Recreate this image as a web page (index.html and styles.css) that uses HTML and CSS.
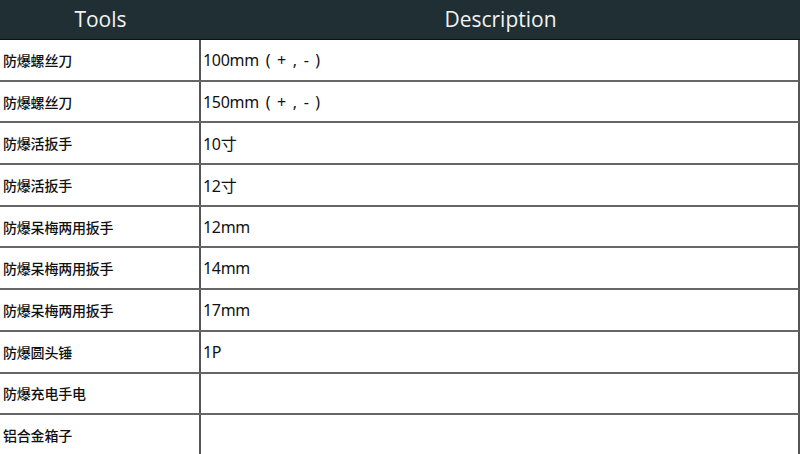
FILE: index.html
```html
<!DOCTYPE html>
<html>
<head>
<meta charset="utf-8">
<link rel="stylesheet" href="styles.css">
</head>
<body>
<div class="table">
  <div class="head">
    <div class="hcell">Tools</div>
    <div class="hcell">Description</div>
  </div>
  <div class="row"><div class="c1">防爆螺丝刀</div><div class="c2">100mm ( + , - )</div></div>
  <div class="row"><div class="c1">防爆螺丝刀</div><div class="c2">150mm ( + , - )</div></div>
  <div class="row"><div class="c1">防爆活扳手</div><div class="c2">10寸</div></div>
  <div class="row"><div class="c1">防爆活扳手</div><div class="c2">12寸</div></div>
  <div class="row"><div class="c1">防爆呆梅两用扳手</div><div class="c2">12mm</div></div>
  <div class="row"><div class="c1">防爆呆梅两用扳手</div><div class="c2">14mm</div></div>
  <div class="row"><div class="c1">防爆呆梅两用扳手</div><div class="c2">17mm</div></div>
  <div class="row"><div class="c1">防爆圆头锤</div><div class="c2">1P</div></div>
  <div class="row"><div class="c1">防爆充电手电</div><div class="c2"></div></div>
  <div class="row"><div class="c1">铝合金箱子</div><div class="c2"></div></div>
</div>
</body>
</html>
```
FILE: styles.css
```css
html, body {
  margin: 0;
  padding: 0;
  background: #ffffff;
  overflow: hidden;
}
.table {
  width: 800px;
  font-family: "Noto Sans", "Noto Sans CJK SC", sans-serif;
}
.head {
  display: grid;
  grid-template-columns: 201px 599px;
  height: 40px;
  background: #1f2f33;
  border-bottom: 1px solid #111;
  box-sizing: border-box;
}
.hcell {
  color: #f2f2f2;
  font-family: "Open Sans", sans-serif;
  font-size: 21px;
  display: flex;
  align-items: center;
  justify-content: center;
  padding-bottom: 1px;
}
.row {
  display: grid;
  grid-template-columns: 201px 597px;
  height: 41.7px;
  border-bottom: 2px solid #666;
  border-right: 2px solid #555;
  box-sizing: border-box;
}
.c1, .c2 {
  display: flex;
  align-items: center;
  color: #111;
  padding-left: 3px;
}
.c1 {
  border-right: 2px solid #555;
  font-family: "Noto Sans CJK SC", sans-serif;
  font-size: 14px;
  font-weight: 500;
  letter-spacing: -0.2px;
}
.c2 {
  font-family: "Noto Sans", "Noto Sans CJK SC", sans-serif;
  font-size: 16px;
  padding-left: 2px;
  letter-spacing: -0.3px;
  word-spacing: 3px;
  white-space: pre;
}
```
